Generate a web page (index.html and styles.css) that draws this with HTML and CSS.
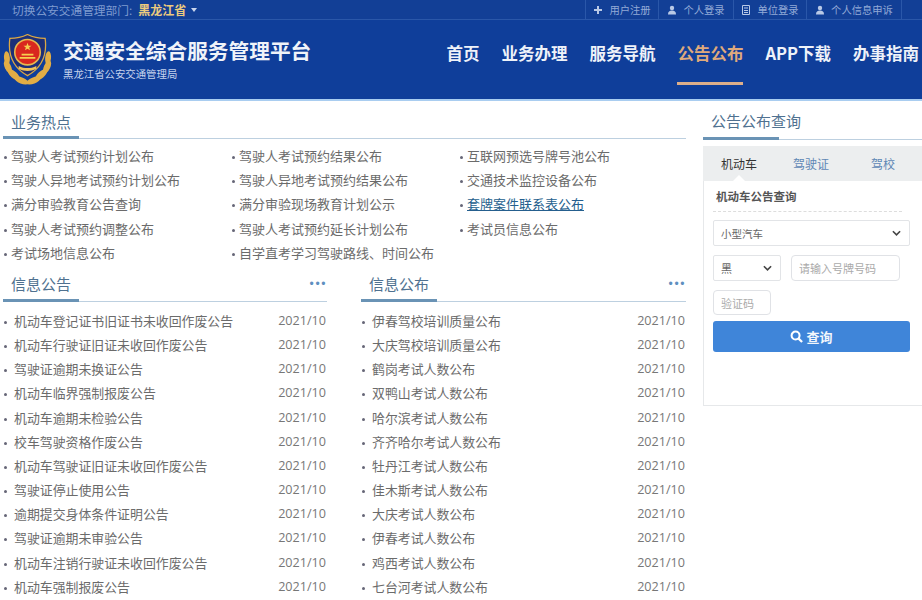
FILE: index.html
```html
<!DOCTYPE html>
<html lang="zh-CN">
<head>
<meta charset="utf-8">
<title>交通安全综合服务管理平台</title>
<link rel="stylesheet" href="styles.css">
</head>
<body>
<header class="site-head">
  <div class="topbar">
    <div class="switch">切换公安交通管理部门: <b class="prov">黑龙江省</b><i class="caret"></i></div>
    <nav class="toplinks">
      <a class="toplink w74"><svg class="ti" viewBox="0 0 10 10"><path d="M4 1h2v3h3v2H6v3H4V6H1V4h3z"/></svg>用户注册</a>
      <a class="toplink w75"><svg class="ti" viewBox="0 0 10 10"><circle cx="5" cy="3" r="2.2"/><path d="M1 9.5c0-3 1.5-4 4-4s4 1 4 4z"/></svg>个人登录</a>
      <a class="toplink w73"><svg class="ti" viewBox="0 0 10 10"><path d="M1.5 .5h7v9h-7z" fill="none" stroke="#b9c9e6"/><path d="M3 2.5h4v1H3zM3 5h4v1H3zM3 7h4v1H3z"/></svg>单位登录</a>
      <a class="toplink w95"><svg class="ti" viewBox="0 0 10 10"><circle cx="5" cy="3" r="2.2"/><path d="M1 9.5c0-3 1.5-4 4-4s4 1 4 4z"/></svg>个人信息申诉</a>
    </nav>
  </div>
  <div class="brandbar">
    <div class="brand">
      <svg class="emblem" viewBox="0 0 50 52">
        <g fill="#e2ad45">
          <ellipse cx="4" cy="24" rx="3" ry="7" transform="rotate(-5 4 24)"/>
          <ellipse cx="5" cy="33" rx="3.200" ry="7" transform="rotate(-25 5 33)"/>
          <ellipse cx="11" cy="41" rx="3.400" ry="8" transform="rotate(-48 11 41)"/>
          <ellipse cx="19" cy="47" rx="3.200" ry="7.500" transform="rotate(-68 19 47)"/>
          <ellipse cx="46" cy="24" rx="3" ry="7" transform="rotate(5 46 24)"/>
          <ellipse cx="45" cy="33" rx="3.200" ry="7" transform="rotate(25 45 33)"/>
          <ellipse cx="39" cy="41" rx="3.400" ry="8" transform="rotate(48 39 41)"/>
          <ellipse cx="31" cy="47" rx="3.200" ry="7.500" transform="rotate(68 31 47)"/>
        </g>
        <path d="M25 0c6 3 12 4 18 4 2 15-2 29-18 38C9 33 5 19 7 4c6 0 12-1 18-4z" fill="#1d2f78" stroke="#dba845" stroke-width="1.300"/>
        <circle cx="25" cy="18" r="13" fill="#d9281f" stroke="#e8b94f" stroke-width="1.600"/>
        <path d="M25 8.500l1.100 2.900h3l-2.400 1.800 .9 2.900-2.600-1.700-2.600 1.700 .9-2.900-2.400-1.800h3z" fill="#f6cf4f"/>
        <path d="M17 23h16v1.800H17zM19 19.500h12v2H19z" fill="#f6cf4f"/>
        <path d="M16 32c6 3 12 3 18 0v3c-6 3-12 3-18 0z" fill="#efc25a"/>
      </svg>
      <div class="brandtext">
        <div class="brandname">交通安全综合服务管理平台</div>
        <div class="brandsub">黑龙江省公安交通管理局</div>
      </div>
    </div>
    <nav class="mainnav">
      <a class="navitem">首页</a>
      <a class="navitem">业务办理</a>
      <a class="navitem">服务导航</a>
      <a class="navitem active">公告公布</a>
      <a class="navitem">APP下载</a>
      <a class="navitem">办事指南</a>
    </nav>
  </div>
</header>

<main class="page">
  <div class="leftcol">
    <section class="hot">
      <h2 class="sectitle"><span>业务热点</span></h2>
      <ul class="hotgrid">
        <li>驾驶人考试预约计划公布</li>
        <li>驾驶人考试预约结果公布</li>
        <li>互联网预选号牌号池公布</li>
        <li>驾驶人异地考试预约计划公布</li>
        <li>驾驶人异地考试预约结果公布</li>
        <li>交通技术监控设备公布</li>
        <li>满分审验教育公告查询</li>
        <li>满分审验现场教育计划公示</li>
        <li class="link">套牌案件联系表公布</li>
        <li>驾驶人考试预约调整公布</li>
        <li>驾驶人考试预约延长计划公布</li>
        <li>考试员信息公布</li>
        <li>考试场地信息公布</li>
        <li>自学直考学习驾驶路线、时间公布</li>
      </ul>
    </section>
    <div class="lists">
      <section class="listbox">
        <h2 class="sectitle"><span>信息公告</span><em class="more">•••</em></h2>
        <ul class="newslist">
          <li><span>机动车登记证书旧证书未收回作废公告</span><time>2021/10</time></li>
          <li><span>机动车行驶证旧证未收回作废公告</span><time>2021/10</time></li>
          <li><span>驾驶证逾期未换证公告</span><time>2021/10</time></li>
          <li><span>机动车临界强制报废公告</span><time>2021/10</time></li>
          <li><span>机动车逾期未检验公告</span><time>2021/10</time></li>
          <li><span>校车驾驶资格作废公告</span><time>2021/10</time></li>
          <li><span>机动车驾驶证旧证未收回作废公告</span><time>2021/10</time></li>
          <li><span>驾驶证停止使用公告</span><time>2021/10</time></li>
          <li><span>逾期提交身体条件证明公告</span><time>2021/10</time></li>
          <li><span>驾驶证逾期未审验公告</span><time>2021/10</time></li>
          <li><span>机动车注销行驶证未收回作废公告</span><time>2021/10</time></li>
          <li><span>机动车强制报废公告</span><time>2021/10</time></li>
        </ul>
      </section>
      <section class="listbox">
        <h2 class="sectitle"><span>信息公布</span><em class="more">•••</em></h2>
        <ul class="newslist">
          <li><span>伊春驾校培训质量公布</span><time>2021/10</time></li>
          <li><span>大庆驾校培训质量公布</span><time>2021/10</time></li>
          <li><span>鹤岗考试人数公布</span><time>2021/10</time></li>
          <li><span>双鸭山考试人数公布</span><time>2021/10</time></li>
          <li><span>哈尔滨考试人数公布</span><time>2021/10</time></li>
          <li><span>齐齐哈尔考试人数公布</span><time>2021/10</time></li>
          <li><span>牡丹江考试人数公布</span><time>2021/10</time></li>
          <li><span>佳木斯考试人数公布</span><time>2021/10</time></li>
          <li><span>大庆考试人数公布</span><time>2021/10</time></li>
          <li><span>伊春考试人数公布</span><time>2021/10</time></li>
          <li><span>鸡西考试人数公布</span><time>2021/10</time></li>
          <li><span>七台河考试人数公布</span><time>2021/10</time></li>
        </ul>
      </section>
    </div>
  </div>

  <aside class="side">
    <h2 class="sectitle"><span>公告公布查询</span></h2>
    <div class="panel">
      <div class="tabs">
        <a class="tab on">机动车</a>
        <a class="tab">驾驶证</a>
        <a class="tab">驾校</a>
      </div>
      <div class="form">
        <div class="formtitle">机动车公告查询</div>
        <div class="fakeselect full">小型汽车<svg class="chev" viewBox="0 0 10 6"><path d="M1 1l4 4 4-4" fill="none" stroke="#444" stroke-width="1.800"/></svg></div>
        <div class="formrow">
          <div class="fakeselect prefix">黑<svg class="chev" viewBox="0 0 10 6"><path d="M1 1l4 4 4-4" fill="none" stroke="#444" stroke-width="1.800"/></svg></div>
          <input class="inp plate" placeholder="请输入号牌号码">
        </div>
        <input class="inp code" placeholder="验证码">
        <button class="searchbtn"><svg class="si" viewBox="0 0 14 14"><circle cx="6" cy="6" r="4.300" fill="none" stroke="#fff" stroke-width="2.200"/><path d="M9 9l4 4" stroke="#fff" stroke-width="2.400"/></svg>查询</button>
      </div>
    </div>
  </aside>
</main>
</body>
</html>
```

FILE: styles.css
```css
* { box-sizing: border-box; }
html, body { margin: 0; padding: 0; height: 600px; overflow: hidden; background: #fff; }
body { font-family: "Noto Sans CJK SC", "Open Sans", sans-serif; color: #6b6b6b; font-size: 13px; }
ul { list-style: none; margin: 0; padding: 0; }
h2 { margin: 0; font-weight: 400; }

.site-head { background: #0f3e9a; border-bottom: 2px solid #a9cdf0; height: 101px; }
.topbar { height: 20px; display: flex; justify-content: space-between; background: #123f96; border-bottom: 1px solid #2a57a9; padding: 0 20px 0 12px; }
.switch { font-size: 11.700px; line-height: 19px; color: #7f9bd0; display: flex; align-items: center; }
.prov { color: #eccb7e; font-weight: 700; font-size: 12px; margin-left: 6px; }
.caret { width: 0; height: 0; margin-left: 5px; border: 3.500px solid transparent; border-top: 4px solid #c9d6ee; border-bottom: 0; }
.toplinks { display: flex; border-left: 1px solid #2a57a9; }
.toplink { display: flex; align-items: center; justify-content: center; gap: 6px; font-size: 10.300px; color: #93aad6; border-right: 1px solid #2a57a9; white-space: nowrap; }
.w74 { width: 73px; } .w75 { width: 75px; } .w73 { width: 73px; } .w95 { width: 95px; }
.ti { width: 10px; height: 10px; fill: #b9c9e6; flex: none; }

.brandbar { height: 79px; display: flex; justify-content: space-between; padding: 0 3px 0 3px; }
.brand { display: flex; align-items: center; gap: 11px; padding-bottom: 3px; }
.emblem { width: 49px; height: 52px; margin-top: 3px; }
.brandtext { display: flex; flex-direction: column; gap: 2px; }
.brandname { font-size: 20.700px; font-weight: 700; line-height: 28px; color: #f0f3f9; white-space: nowrap; }
.brandsub { font-size: 10.400px; line-height: 15px; color: #c5d3ec; white-space: nowrap; }
.mainnav { display: flex; gap: 22px; }
.navitem { position: relative; font-size: 16.500px; font-weight: 700; line-height: 66px; color: #eef2f9; white-space: nowrap; }
.navitem.active { color: #dfa97c; }
.navitem.active::after { content: ""; position: absolute; left: 0; right: 0; top: 62px; height: 3px; background: #dcae8a; }

.page { display: flex; gap: 17px; padding-left: 3px; }
.leftcol { width: 683px; flex: none; }
.sectitle { position: relative; height: 38px; padding: 10px 0 0 8px; border-bottom: 1px solid #bdd0e0; font-size: 15px; line-height: 22px; color: #4f7190; display: flex; justify-content: space-between; }
.sectitle::after { content: ""; position: absolute; left: 0; bottom: -1px; width: 76px; height: 3px; background: #6a93b5; }
.more { font-family: "Liberation Sans", sans-serif; font-style: normal; font-size: 12px; letter-spacing: 1.600px; color: #5f8fc0; line-height: 22px; }

.hotgrid { display: grid; grid-template-columns: 228px 228px 227px; grid-auto-rows: 24.200px; padding-top: 5px; }
.hotgrid li { position: relative; padding-left: 8px; line-height: 24px; white-space: nowrap; }
.hotgrid li::before, .newslist li::before { content: ""; position: absolute; left: 1px; top: 12px; width: 3px; height: 3px; border-radius: 50%; background: #667; }
.link { color: #255f8e; text-decoration: underline; }

.lists { display: flex; justify-content: space-between; margin-top: -4px; }
.listbox { width: 325px; }
.listbox:first-child { width: 324px; }
.listbox .sectitle { height: 41px; padding-top: 12px; }
.newslist { padding-top: 7px; }
.newslist li { position: relative; height: 24.180px; display: flex; justify-content: space-between; line-height: 24px; padding: 0 1px 0 11px; font-size: 12.900px; white-space: nowrap; }
.newslist time { font-family: "Open Sans", sans-serif; font-size: 12.600px; color: #777; }

.side { flex: 1; min-width: 0; }
.side .sectitle { padding: 9px 0 0 8px; height: 39px; }
.panel { margin-top: 6px; height: 260px; border: 1px solid #e6e8ea; border-right: 0; }
.tabs { display: flex; height: 35px; margin: -1px 0 0 -1px; background: #eceeef; }
.tab { position: relative; width: 72px; text-align: center; line-height: 35px; font-size: 12px; color: #5f87b5; }
.tab.on { color: #333; }
.tab.on::after { content: ""; position: absolute; left: 30px; bottom: 0; border: 6px solid transparent; border-top: 0; border-bottom-color: #fff; }
.form { padding: 0 9px 0 9px; width: 207px; }
.formtitle { font-size: 11.500px; font-weight: 700; color: #555; line-height: 30px; height: 31px; padding-left: 3px; border-bottom: 1px dashed #ddd; margin-bottom: 8px; }
.fakeselect { display: flex; align-items: center; justify-content: space-between; height: 26px; padding: 0 8px 0 7px; border: 1px solid #e2e4e7; border-radius: 2px; font-size: 10.500px; color: #666; background: #fff; }
.full { width: 197px; }
.prefix { width: 68px; font-size: 11px; }
.chev { width: 9px; height: 6px; }
.formrow { display: flex; gap: 10px; margin-top: 9px; }
.inp { display: block; height: 26px; padding: 0 7px; border: 1px solid #e0e2e6; border-radius: 4px; font: 11px "Noto Sans CJK SC", sans-serif; color: #666; background: #fff; outline: 0; }
.inp::placeholder { color: #aaa; opacity: 1; }
.plate { width: 109px; }
.code { width: 58px; margin-top: 9px; height: 25px; }
.searchbtn { display: flex; align-items: center; justify-content: center; gap: 3px; width: 197px; height: 31px; margin-top: 6px; border: 0; border-radius: 3px; background: #3f85d9; color: #f2f6fc; font: 700 13px "Noto Sans CJK SC", sans-serif; padding: 0; }
.si { width: 13px; height: 13px; }
```
